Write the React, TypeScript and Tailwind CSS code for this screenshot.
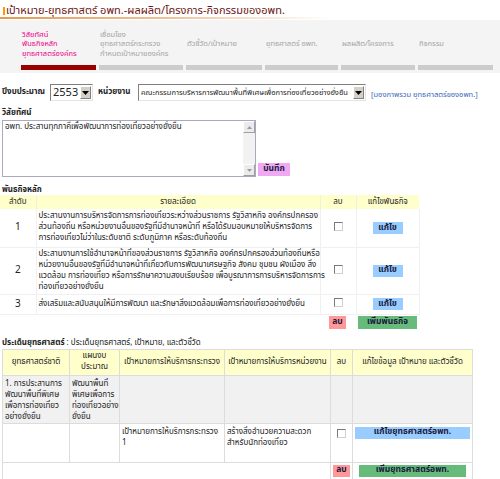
import React from 'react';

const tabs = [
  { lines: ['วิสัยทัศน์', 'พันธกิจหลัก', 'ยุทธศาสตร์องค์กร'], w: 'w-[75px]', active: true },
  { lines: ['เชื่อมโยง', 'ยุทธศาสตร์กระทรวง', 'กำหนดเป้าหมายองค์กร'], w: 'w-[84px]' },
  { lines: ['ตัวชี้วัด/เป้าหมาย'], w: 'w-[76px]' },
  { lines: ['ยุทธศาสตร์ อพท.'], w: 'w-[73px]' },
  { lines: ['ผลผลิต/โครงการ'], w: 'w-[74px]' },
  { lines: ['กิจกรรม'], w: 'w-[75px]' },
];

const missions = [
  {
    no: '1',
    h: 'h-[38px]',
    lines: [
      'ประสานงานการบริหารจัดการการท่องเที่ยวระหว่างส่วนราชการ รัฐวิสาหกิจ องค์กรปกครอง',
      'ส่วนท้องถิ่น หรือหน่วยงานอื่นของรัฐที่มีอำนาจหน้าที่ หรือได้รับมอบหมายให้บริหารจัดการ',
      'การท่องเที่ยวไม่ว่าในระดับชาติ ระดับภูมิภาค หรือระดับท้องถิ่น',
    ],
  },
  {
    no: '2',
    h: 'h-[47px]',
    lines: [
      'ประสานงานการใช้อำนาจหน้าที่ของส่วนราชการ รัฐวิสาหกิจ องค์กรปกครองส่วนท้องถิ่นหรือ',
      'หน่วยงานอื่นของรัฐที่มีอำนาจหน้าที่เกี่ยวกับการพัฒนาเศรษฐกิจ สังคม ชุมชน ผังเมือง สิ่ง',
      'แวดล้อม การท่องเที่ยว หรือการรักษาความสงบเรียบร้อย เพื่อบูรณาการการบริหารจัดการการ',
      'ท่องเที่ยวอย่างยั่งยืน',
    ],
  },
  {
    no: '3',
    h: 'h-[20px]',
    lines: ['ส่งเสริมและสนับสนุนให้มีการพัฒนา และรักษาสิ่งแวดล้อมเพื่อการท่องเที่ยวอย่างยั่งยืน'],
  },
];

function DropButton() {
  return (
    <div className="flex h-[13px] w-[11px] shrink-0 items-center justify-center border border-t-white border-l-white border-r-[#808080] border-b-[#808080] bg-[#d4d0c8]">
      <svg width="7" height="4" viewBox="0 0 7 4">
        <path d="M0 0h7L3.5 4z" fill="#000" />
      </svg>
    </div>
  );
}

function FakeSelect({ value, className }: { value: string; className: string }) {
  return (
    <div
      className={`flex h-[17px] items-center justify-between border border-t-[#808080] border-l-[#808080] border-r-[#e4e4e4] border-b-[#e4e4e4] bg-white pl-[2px] pr-[1px] ${className}`}
    >
      <span className="overflow-hidden whitespace-nowrap leading-[15px]">{value}</span>
      <DropButton />
    </div>
  );
}

function ScrollArrow({ up }: { up?: boolean }) {
  return (
    <div className="flex h-[12px] w-[12px] items-center justify-center border border-t-white border-l-white border-r-[#a0a0a0] border-b-[#a0a0a0] bg-[#ebebeb]">
      <svg width="5" height="3" viewBox="0 0 5 3">
        <path d={up ? 'M0 3h5L2.5 0z' : 'M0 0h5L2.5 3z'} fill="#9a9a9a" />
      </svg>
    </div>
  );
}

function CheckBox() {
  return (
    <span className="inline-block h-[9px] w-[9px] border border-t-[#7a7a7a] border-l-[#7a7a7a] border-r-[#d0d0d0] border-b-[#d0d0d0] bg-white" />
  );
}

function Btn({ label, color, className = '' }: { label: string; color: string; className?: string }) {
  return (
    <span
      className={`inline-flex h-[12px] items-center justify-center text-[8.5px] font-bold leading-none text-[#1a1a40] ${color} ${className}`}
    >
      {label}
    </span>
  );
}

export default function App() {
  return (
    <div className="h-[479px] w-[500px] overflow-hidden bg-white font-['Tahoma','Noto_Sans_Thai','Loma','Garuda',sans-serif] text-[8.5px] leading-[11px] text-[#222]">
      {/* หัวเรื่อง */}
      <div className="relative h-[20px]">
        <div className="flex items-center pl-[3px] pt-[4px] text-[11px] leading-[14px] text-[#6b1616]">
          <span className="mr-[1px] inline-block h-[8px] w-[2px] bg-[#ff9900]" />
          เป้าหมาย-ยุทธศาสตร์ อพท.-ผลผลิต/โครงการ-กิจกรรมของอพท.
        </div>
        <div className="absolute bottom-[1px] left-0 h-[2px] w-[330px] bg-linear-to-r from-[#e59a4e] via-[#efc196] to-transparent" />
      </div>

      {/* แถบขั้นตอน */}
      <div className="flex h-[53px] gap-[3px] bg-[#f4f4f4] pl-[21px]">
        {tabs.map((t, i) => (
          <div key={i} className={`flex flex-col ${t.w}`}>
            <div
              className={`flex h-[45px] flex-col justify-center pl-[1px] pt-[3px] text-[7.5px] leading-[9.5px] ${
                t.active ? 'text-[#ee0088]' : 'text-[#a3a3a3]'
              }`}
            >
              {t.lines.map((l) => (
                <div key={l} className="whitespace-nowrap">
                  {l}
                </div>
              ))}
            </div>
            <div className={`h-[5px] ${t.active ? 'bg-[#990000]' : 'bg-[#cccccc]'}`} />
          </div>
        ))}
      </div>

      {/* ปีงบประมาณ / หน่วยงาน */}
      <div className="mt-[11px] flex h-[17px] items-center pl-[2px]">
        <span className="w-[48px] whitespace-nowrap text-[8px] font-bold">ปีงบประมาณ</span>
        <FakeSelect value="2553" className="w-[43px] text-[11px]" />
        <span className="ml-[5px] w-[40px] whitespace-nowrap text-[8px] font-bold">หน่วยงาน</span>
        <FakeSelect
          value="คณะกรรมการบริหารการพัฒนาพื้นที่พิเศษเพื่อการท่องเที่ยวอย่างยั่งยืน"
          className="w-[228px] text-[7.5px]"
        />
        <span className="ml-[5px] mt-[3px] whitespace-nowrap text-[7.5px] text-[#3a68b8]">
          [มองภาพรวม ยุทธศาสตร์ของอพท.]
        </span>
      </div>

      {/* วิสัยทัศน์ */}
      <div className="mt-[7px] pl-[2px] text-[8px] font-bold">วิสัยทัศน์</div>
      <div className="mt-[1px] flex items-end pl-[2px]">
        <div className="flex h-[57px] w-[254px] border border-[#a9a9c4] bg-white">
          <div className="flex-1 pl-[2px] pt-[1px] text-[8px]">
            อพท. ประสานทุกภาคีเพื่อพัฒนาการท่องเที่ยวอย่างยั่งยืน
          </div>
          <div className="flex w-[12px] flex-col justify-between bg-[#f2f2f2]">
            <ScrollArrow up />
            <ScrollArrow />
          </div>
        </div>
        <Btn label="บันทึก" color="bg-[#f0a8f4]" className="mb-[1px] ml-[2px] h-[13px] w-[32px]" />
      </div>

      {/* พันธกิจหลัก */}
      <div className="mt-[9px] h-[9px] pl-[2px] text-[8px] font-bold leading-[9px]">พันธกิจหลัก</div>
      <table className="w-[419px] table-fixed border-collapse">
        <colgroup>
          <col className="w-[36px]" />
          <col className="w-[284px]" />
          <col className="w-[36px]" />
          <col className="w-[63px]" />
        </colgroup>
        <thead>
          <tr className="h-[14px] bg-[#ffffcc] text-[8px]">
            <th className="border-r border-[#f0f0e0] font-normal">ลำดับ</th>
            <th className="border-r border-[#f0f0e0] font-normal">รายละเอียด</th>
            <th className="border-r border-[#f0f0e0] font-normal">ลบ</th>
            <th className="font-normal">แก้ไขพันธกิจ</th>
          </tr>
        </thead>
        <tbody>
          {missions.map((m) => (
            <tr key={m.no} className={`${m.h} border-b border-[#f0f0f0]`}>
              <td className="border-r border-[#f0f0f0] text-center text-[10px]">{m.no}</td>
              <td className="border-r border-[#f0f0f0] pl-[2px] text-[8px]">
                {m.lines.map((l) => (
                  <div key={l} className="whitespace-nowrap">
                    {l}
                  </div>
                ))}
              </td>
              <td className="border-r border-[#f0f0f0] text-center">
                <CheckBox />
              </td>
              <td className="border-r border-[#f0f0f0] text-center">
                <Btn label="แก้ไข" color="bg-[#99ccff]" className="w-[30px]" />
              </td>
            </tr>
          ))}
        </tbody>
      </table>
      <div className="mt-[1px] flex h-[13px] pl-[329px]">
        <Btn label="ลบ" color="bg-[#ff9999]" className="h-[13px] w-[17px]" />
        <Btn label="เพิ่มพันธกิจ" color="bg-[#66bb7a]" className="ml-[12px] h-[13px] w-[59px]" />
      </div>

      {/* ประเด็นยุทธศาสตร์ */}
      <div className="mt-[8px] pl-[2px]">
        <span className="text-[8px] font-bold">ประเด็นยุทธศาสตร์</span>
        <span className="text-[8px]"> : ประเด็นยุทธศาสตร์, เป้าหมาย, และตัวชี้วัด</span>
      </div>
      <div className="pl-[2px]">
        <table className="w-[470px] table-fixed border-collapse border border-[#dcdcdc] text-[8px]">
          <colgroup>
            <col className="w-[67px]" />
            <col className="w-[50px]" />
            <col className="w-[105px]" />
            <col className="w-[106px]" />
            <col className="w-[22px]" />
            <col className="w-[120px]" />
          </colgroup>
          <thead>
            <tr className="h-[26px] bg-[#ffffcc]">
              <th className="border border-[#dcdcdc] font-normal">ยุทธศาสตร์ชาติ</th>
              <th className="border border-[#dcdcdc] font-normal">
                แผนงบ
                <br />
                ประมาณ
              </th>
              <th className="whitespace-nowrap border border-[#dcdcdc] font-normal">เป้าหมายการให้บริการกระทรวง</th>
              <th className="whitespace-nowrap border border-[#dcdcdc] font-normal">เป้าหมายการให้บริการหน่วยงาน</th>
              <th className="border border-[#dcdcdc] font-normal">ลบ</th>
              <th className="whitespace-nowrap border border-[#dcdcdc] font-normal">แก้ไขข้อมูล เป้าหมาย และตัวชี้วัด</th>
            </tr>
          </thead>
          <tbody>
            <tr className="h-[47px] bg-[#f1f1f1] align-top">
              <td className="border border-[#dcdcdc] pl-[2px] pt-[3px]">
                1. การประสานการ
                <br />
                พัฒนาพื้นที่พิเศษ
                <br />
                เพื่อการท่องเที่ยว
                <br />
                อย่างยั่งยืน
              </td>
              <td className="border border-[#dcdcdc] pl-[2px] pt-[3px]">
                พัฒนาพื้นที่
                <br />
                พิเศษเพื่อการ
                <br />
                ท่องเที่ยวอย่าง
                <br />
                ยั่งยืน
              </td>
              <td className="border border-[#dcdcdc]" />
              <td className="border border-[#dcdcdc]" />
              <td className="border border-[#dcdcdc]" />
              <td className="border border-[#dcdcdc]" />
            </tr>
            <tr className="h-[39px] align-top">
              <td className="border border-[#dcdcdc]" />
              <td className="border border-[#dcdcdc]" />
              <td className="border border-[#dcdcdc] pl-[2px] pt-[3px]">
                เป้าหมายการให้บริการกระทรวง
                <br />1
              </td>
              <td className="border border-[#dcdcdc] pl-[2px] pt-[3px]">
                สร้างสิ่งอำนวยความสะดวก
                <br />
                สำหรับนักท่องเที่ยว
              </td>
              <td className="border border-[#dcdcdc] pt-[5px] text-center">
                <CheckBox />
              </td>
              <td className="border border-[#dcdcdc] px-[2px] pt-[3px]">
                <Btn label="แก้ไขยุทธศาสตร์อพท." color="bg-[#99ccff]" className="w-full" />
              </td>
            </tr>
            <tr className="h-[17px]">
              <td colSpan={4} className="border border-[#dcdcdc]" />
              <td className="border border-[#dcdcdc] text-center">
                <Btn label="ลบ" color="bg-[#ff9999]" className="w-[17px]" />
              </td>
              <td className="border border-[#dcdcdc] text-center">
                <Btn label="เพิ่มยุทธศาสตร์อพท." color="bg-[#66bb7a]" className="w-[107px]" />
              </td>
            </tr>
          </tbody>
        </table>
      </div>
    </div>
  );
}
